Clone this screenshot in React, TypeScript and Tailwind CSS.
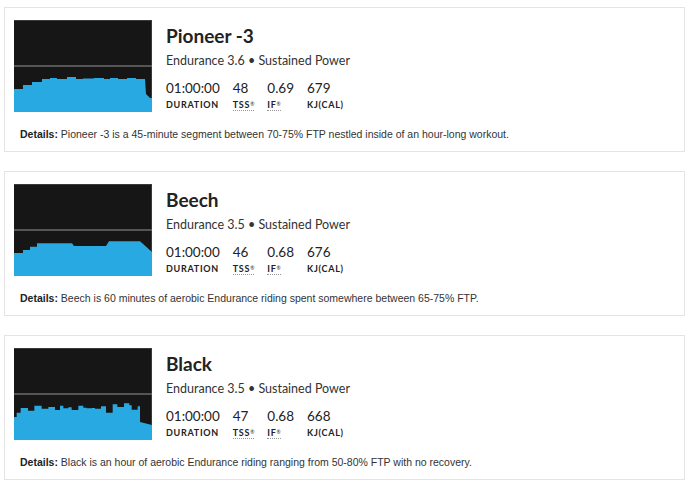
const blue = '#29a9e1';

type Workout = {
  name: string;
  level: string;
  tss: string;
  ifv: string;
  kj: string;
  details: string;
  profile: [number, number][];
};

// profile points are in the 138x92 chart space
const toChart = (pts: [number, number][], yOff: number): [number, number][] =>
  pts.map(([x, y]) => [x / 3 - 14, y / 3 + yOff]);

const pioneer: [number, number][] = [
  [0, 69], [9, 69], [9, 65], [18, 65], [18, 62], [28, 62], [28, 59], [36, 59], [36, 58], [43, 58],
  [43, 59], [53, 59], [53, 57], [62, 57], [62, 59], [69, 59], [69, 58.5], [80, 58.5], [80, 58],
  [90, 58], [90, 59], [96, 59], [96, 58], [104, 58], [104, 59], [113, 59], [113, 58], [122, 58],
  [122, 59], [131, 59], [132, 74], [136, 78], [138, 78],
];

const beech: [number, number][] = [
  [0, 69], [9, 69], [9, 66], [16, 66], [16, 62.7], [23, 62.7], [23, 59.3], [58, 59.3], [60, 62],
  [92, 62], [95, 57.3], [126, 57.3], [138, 68],
];

const blackSteps = toChart(
  [
    [42, 243], [50, 230], [62, 216], [84, 224], [103, 209], [125, 218], [145, 213], [165, 222],
    [180, 209], [190, 217], [205, 214], [215, 222], [235, 209], [250, 215], [260, 217], [275, 216],
    [285, 218], [303, 211], [318, 230], [338, 205], [352, 213], [372, 202], [388, 208], [395, 221],
    [413, 211], [420, 258],
  ],
  -12,
);
const black: [number, number][] = [];
blackSteps.forEach(([x, y], i) => {
  if (i > 0) black.push([x, black[black.length - 1][1]]);
  black.push([x, y]);
});
black.push([138, 77]);

const workouts: Workout[] = [
  {
    name: 'Pioneer -3',
    level: 'Endurance 3.6',
    tss: '48',
    ifv: '0.69',
    kj: '679',
    details: 'Pioneer -3 is a 45-minute segment between 70-75% FTP nestled inside of an hour-long workout.',
    profile: pioneer,
  },
  {
    name: 'Beech',
    level: 'Endurance 3.5',
    tss: '46',
    ifv: '0.68',
    kj: '676',
    details: 'Beech is 60 minutes of aerobic Endurance riding spent somewhere between 65-75% FTP.',
    profile: beech,
  },
  {
    name: 'Black',
    level: 'Endurance 3.5',
    tss: '47',
    ifv: '0.68',
    kj: '668',
    details: 'Black is an hour of aerobic Endurance riding ranging from 50-80% FTP with no recovery.',
    profile: black,
  },
];

function Chart({ profile }: { profile: [number, number][] }) {
  const pts = [[0, 92], ...profile, [138, 92]].map(([x, y]) => `${x},${y}`).join(' ');
  return (
    <svg width="138" height="92" viewBox="0 0 138 92" className="block shrink-0">
      <rect width="138" height="92" fill="#161616" />
      <line x1="0" y1="0.5" x2="138" y2="0.5" stroke="#3a3a3a" />
      <line x1="137.5" y1="0" x2="137.5" y2="92" stroke="#3a3a3a" />
      <line x1="0" y1="46" x2="138" y2="46" stroke="#6b6b6b" strokeWidth="1.5" />
      <polygon points={pts} fill={blue} />
    </svg>
  );
}

function Stat({ value, label, sup }: { value: string; label: string; sup?: boolean }) {
  return (
    <div className="mr-[13px] flex flex-col">
      <span className="text-[13.5px] leading-[15px] text-[#222]">{value}</span>
      <span
        className={`mt-[3px] self-start text-[9px] font-bold leading-[11px] tracking-[0.08em] text-[#222] ${
          sup ? 'border-b border-dotted border-[#999]' : ''
        }`}
      >
        {label}
        {sup && <sup className="text-[5px] font-normal tracking-normal">®</sup>}
      </span>
    </div>
  );
}

function Card({ w }: { w: Workout }) {
  return (
    <div className="border border-[#e4e4e4] bg-white pl-[9px] pr-3 pt-3 pb-[10px]">
      <div className="flex">
        <Chart profile={w.profile} />
        <div className="ml-[14px] flex flex-col pt-[5px]">
          <h2 className="text-[19px] font-bold leading-[22px] text-[#222]">{w.name}</h2>
          <p className="mt-[6px] text-[12.5px] leading-[16px] text-[#333]">
            {w.level} • Sustained Power
          </p>
          <div className="mt-[12px] flex">
            <Stat value="01:00:00" label="DURATION" />
            <Stat value={w.tss} label="TSS" sup />
            <Stat value={w.ifv} label="IF" sup />
            <Stat value={w.kj} label="KJ(CAL)" />
          </div>
        </div>
      </div>
      <p className="mt-[15px] pl-[6px] font-['Liberation_Sans',Arial,sans-serif] text-[10.5px] leading-[14px] text-[#333]">
        <span className="font-bold text-[#222]">Details:</span> {w.details}
      </p>
    </div>
  );
}

export default function App() {
  return (
    <div className="flex h-[485px] w-[690px] flex-col gap-[19px] bg-white pl-[4px] pr-[5px] pt-[7px] font-['Lato','Noto_Sans',sans-serif]">
      {workouts.map((w) => (
        <Card key={w.name} w={w} />
      ))}
    </div>
  );
}
